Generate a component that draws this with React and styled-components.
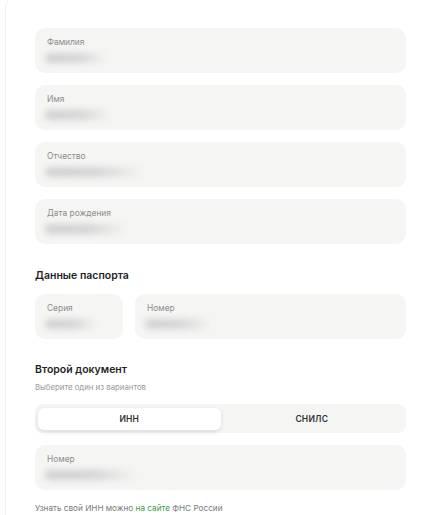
import React from "react";
import styled, { createGlobalStyle } from "styled-components";

const GlobalStyle = createGlobalStyle`
  html, body {
    margin: 0;
    padding: 0;
    background: #ffffff;
    font-family: Inter, "Noto Sans", sans-serif;
    overflow: hidden;
  }
`;

const Card = styled.div`
  margin-left: 5px;
  margin-top: -6px;
  padding: 33px 16px 0 29px;
  border: 1px solid #f1f1f1;
  border-right: none;
  border-bottom: none;
  border-radius: 14px 0 0 0;
  height: calc(100vh + 6px);
  box-sizing: border-box;
  display: flex;
  flex-direction: column;
`;

const Stack = styled.div`
  display: flex;
  flex-direction: column;
  gap: 12px;
  margin-top: ${(p) => p.$top || 0}px;
`;

const Row = styled.div`
  display: flex;
  gap: 12px;
  margin-top: 10px;
`;

const Field = styled.div`
  box-sizing: border-box;
  height: 45px;
  flex: ${(p) => (p.$w ? `0 0 ${p.$w}px` : "1 1 auto")};
  background: #f5f5f4;
  border-radius: 10px;
  padding: 9px 12px 0;
  display: flex;
  flex-direction: column;
  gap: 5px;
`;

const Label = styled.span`
  font-size: 8.4px;
  line-height: 11px;
  color: #8c8c8c;
`;

const Blurred = styled.div`
  height: 10px;
  width: ${(p) => p.$w}px;
  border-radius: 5px;
  background: linear-gradient(90deg, #d0d0d0 0%, #d5d5d5 55%, rgba(235, 235, 235, 0) 100%);
  filter: blur(3px);
  margin-left: -2px;
`;

const Heading = styled.h3`
  margin: ${(p) => p.$top}px 0 0;
  font-size: 10.5px;
  line-height: 16px;
  font-weight: 600;
  color: #1f1f1f;
`;

const Hint = styled.p`
  margin: 2px 0 0;
  font-size: 7.8px;
  line-height: 14px;
  color: #9a9a9a;
`;

const Tabs = styled.div`
  margin-top: 10px;
  height: 29px;
  box-sizing: border-box;
  background: #f5f5f4;
  border-radius: 8px;
  padding: 4px 3px 3px;
  display: flex;
`;

const Tab = styled.button`
  flex: 1;
  border: none;
  border-radius: 6px;
  background: ${(p) => (p.$active ? "#ffffff" : "transparent")};
  box-shadow: ${(p) => (p.$active ? "0 2px 5px rgba(0,0,0,0.1)" : "none")};
  font-family: inherit;
  font-size: 8.5px;
  font-weight: 600;
  color: #333;
  letter-spacing: 0.2px;
  cursor: pointer;
`;

const Footer = styled.p`
  margin: 11px 0 0;
  font-size: 8.2px;
  line-height: 14px;
  color: #7a7a7a;
`;

const Link = styled.a`
  color: #3d9b4a;
  text-decoration: none;
`;

const personal = [
  { label: "Фамилия", blur: 62 },
  { label: "Имя", blur: 66 },
  { label: "Отчество", blur: 98 },
  { label: "Дата рождения", blur: 82 },
];

export default function App() {
  return (
    <>
      <GlobalStyle />
      <Card>
        <Stack>
          {personal.map((f) => (
            <Field key={f.label}>
              <Label>{f.label}</Label>
              <Blurred $w={f.blur} />
            </Field>
          ))}
        </Stack>

        <Heading $top={24}>Данные паспорта</Heading>
        <Row>
          <Field $w={88}>
            <Label>Серия</Label>
            <Blurred $w={52} />
          </Field>
          <Field>
            <Label>Номер</Label>
            <Blurred $w={66} />
          </Field>
        </Row>

        <Heading $top={23}>Второй документ</Heading>
        <Hint>Выберите один из вариантов</Hint>
        <Tabs>
          <Tab $active>ИНН</Tab>
          <Tab>СНИЛС</Tab>
        </Tabs>
        <Stack $top={12}>
          <Field>
            <Label>Номер</Label>
            <Blurred $w={92} />
          </Field>
        </Stack>
        <Footer>
          Узнать свой ИНН можно <Link href="#">на сайте</Link> ФНС России
        </Footer>
      </Card>
    </>
  );
}
